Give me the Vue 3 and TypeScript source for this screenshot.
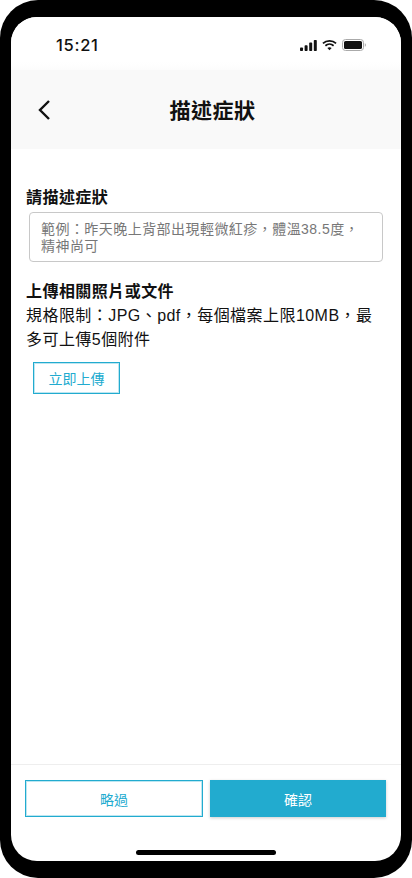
<script setup lang="ts">
const title: string = '描述症狀'
</script>

<template>
  <div class="frame">
    <div class="screen">
      <div class="status">
        <span class="time">15:21</span>
        <div class="status-icons">
          <svg width="17" height="11" viewBox="0 0 17 11">
            <rect x="0" y="7.5" width="3" height="3.5" rx="0.8" fill="#111" />
            <rect x="4.6" y="5.2" width="3" height="5.8" rx="0.8" fill="#111" />
            <rect x="9.2" y="2.6" width="3" height="8.4" rx="0.8" fill="#111" />
            <rect x="13.8" y="0" width="3" height="11" rx="0.8" fill="#111" />
          </svg>
          <svg width="15" height="12" viewBox="0 0 16 12">
            <path d="M1 4.2C4.9 .6 11.1 .6 15 4.2" fill="none" stroke="#111" stroke-width="1.9" />
            <path d="M3.6 6.8c2.5-2.2 6.3-2.2 8.8 0" fill="none" stroke="#111" stroke-width="1.9" />
            <path d="M5.7 9.1c1.4-1.1 3.2-1.1 4.6 0L8 11.6z" fill="#111" />
          </svg>
          <svg width="24" height="12" viewBox="0 0 24 12">
            <rect x="0.5" y="0.5" width="21" height="11" rx="3" fill="none" stroke="#aaa" />
            <rect x="2" y="2" width="18" height="8" rx="1.6" fill="#111" />
            <path d="M22.8 4.2c.7.3 1.1 1 1.1 1.8s-.4 1.5-1.1 1.8z" fill="#aaa" />
          </svg>
        </div>
      </div>
      <header class="header">
        <svg class="back" width="14" height="22" viewBox="0 0 14 22">
          <path d="M12 2 3 11l9 9" fill="none" stroke="#111" stroke-width="2.4" />
        </svg>
        <h1 class="title">{{ title }}</h1>
      </header>
      <main class="content">
        <h2 class="label">請描述症狀</h2>
        <div class="textarea">範例：昨天晚上背部出現輕微紅疹，體溫38.5度，精神尚可</div>
        <h2 class="label upload-label">上傳相關照片或文件</h2>
        <p class="hint">規格限制：JPG、pdf，每個檔案上限10MB，最多可上傳5個附件</p>
        <button class="upload">立即上傳</button>
      </main>
      <footer class="footer">
        <button class="btn outline">略過</button>
        <button class="btn solid">確認</button>
      </footer>
      <div class="home-wrap"><div class="home"></div></div>
    </div>
  </div>
</template>

<style scoped>
.frame {
  width: 412px;
  height: 878px;
  box-sizing: border-box;
  padding: 17px 11px;
  background: #000;
  border-radius: 38px;
  font-family: "Liberation Sans", "Noto Sans CJK TC", sans-serif;
  letter-spacing: 0.45px;
  overflow: hidden;
}
.screen {
  height: 844px;
  background: #fff;
  border-radius: 26px;
  display: flex;
  flex-direction: column;
  overflow: hidden;
}
.status {
  height: 53px;
  flex: none;
  display: flex;
  align-items: center;
  justify-content: space-between;
  padding: 3px 35px 0 45px;
  box-sizing: border-box;
  background: linear-gradient(#fff 85%, #fcfcfc);
}
.time {
  font-family: "Inter", sans-serif;
  font-size: 16.5px;
  font-weight: 500;
  letter-spacing: 0.7px;
  color: #111;
}
.status-icons {
  display: flex;
  align-items: center;
  gap: 5px;
}
.header {
  position: relative;
  height: 79px;
  flex: none;
  box-sizing: border-box;
  background: #f9f9f9;
  display: flex;
  align-items: center;
  justify-content: center;
  padding: 0 0 2px 13px;
}
.back {
  position: absolute;
  left: 26px;
  top: 29px;
}
.title {
  margin: 0;
  font-size: 21px;
  font-weight: 700;
  color: #111;
}
.content {
  flex: 1;
  padding: 39px 15px 0;
  display: flex;
  flex-direction: column;
  align-items: flex-start;
}
.label {
  margin: 0;
  font-size: 16px;
  line-height: 20px;
  font-weight: 700;
  color: #111;
}
.textarea {
  margin: 4px 0 0 3px;
  width: 354px;
  height: 50px;
  box-sizing: border-box;
  border: 1px solid #c8c8c8;
  border-radius: 4px;
  padding: 8px 11px;
  font-size: 14px;
  line-height: 17px;
  color: #777;
}
.upload-label {
  margin-top: 20px;
}
.hint {
  margin: 2px 0 0;
  width: 352px;
  font-size: 16px;
  line-height: 23.5px;
  color: #111;
}
.upload {
  margin: 11px 0 0 7px;
  width: 87px;
  height: 32px;
  border: 1px solid #22abcf;
  box-shadow: inset 0 0 0 1px rgba(34, 171, 207, 0.3);
  background: #fff;
  color: #22abcf;
  font: inherit;
  font-size: 14px;
  padding: 0;
}
.footer {
  flex: none;
  height: 61px;
  box-sizing: border-box;
  border-top: 1px solid #eee;
  padding: 15px 15px 0 14px;
  display: flex;
  gap: 7px;
}
.btn {
  flex: 1 1 0;
  min-width: 0;
  height: 37px;
  font: inherit;
  font-size: 14px;
  padding: 0;
}
.outline {
  background: #fff;
  color: #22abcf;
  border: 1px solid #22abcf;
  box-shadow: inset 0 0 0 1px rgba(34, 171, 207, 0.3);
}
.solid {
  background: #22abcf;
  color: #fff;
  border: none;
  box-shadow: 0 1px 3px rgba(0, 0, 0, 0.2);
}
.home-wrap {
  flex: none;
  height: 36px;
  display: flex;
  justify-content: center;
  align-items: flex-end;
  padding-bottom: 6px;
  box-sizing: border-box;
}
.home {
  width: 140px;
  height: 5px;
  border-radius: 3px;
  background: #000;
}
</style>
<style>
html, body { background: #fff; }
</style>
